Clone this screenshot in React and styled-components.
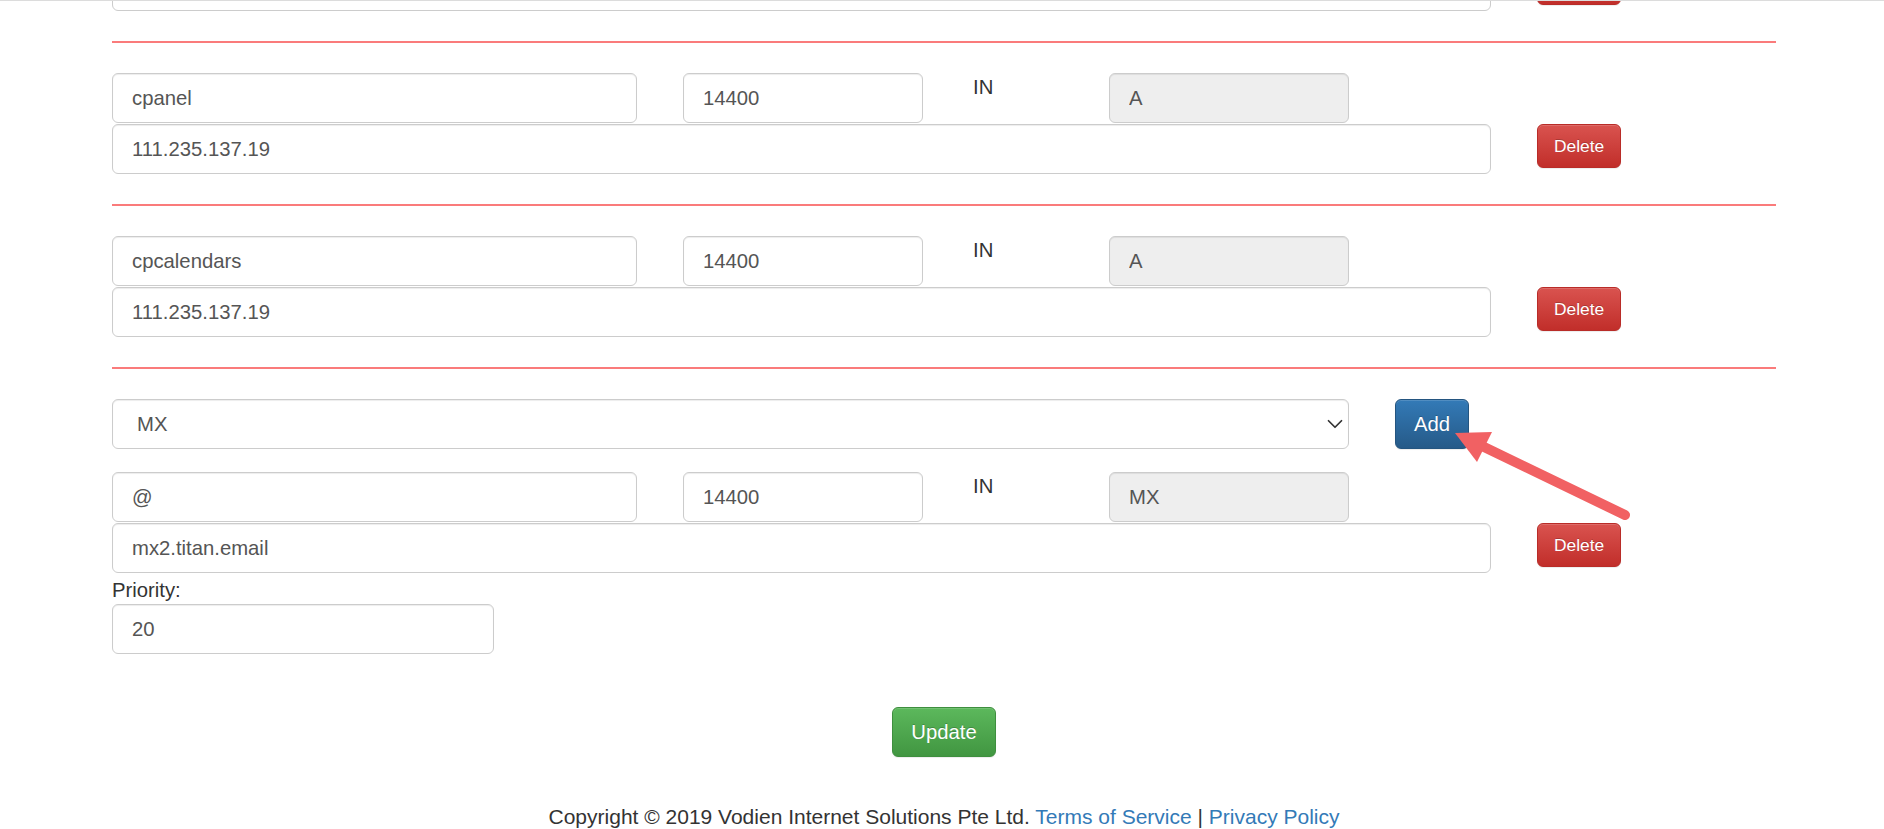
import React from "react";
import styled, { createGlobalStyle } from "styled-components";
import { ChevronDown } from "lucide-react";

const GlobalStyle = createGlobalStyle`
  html, body {
    margin: 0;
    padding: 0;
    background: #ffffff;
  }
  body {
    font-family: "Liberation Sans", Arial, Helvetica, sans-serif;
    color: #333333;
    overflow: hidden;
  }
  * {
    box-sizing: border-box;
  }
`;

const records = [
  { name: "cpanel", ttl: "14400", type: "A", value: "111.235.137.19" },
  { name: "cpcalendars", ttl: "14400", type: "A", value: "111.235.137.19" },
];

const Page = styled.div`
  position: relative;
  width: 100%;
  min-height: 829px;
  overflow: hidden;
`;

const HeaderEdge = styled.div`
  position: fixed;
  top: 0;
  left: 0;
  right: 0;
  height: 1px;
  background: #dcdcdc;
  z-index: 5;
`;

const Container = styled.div`
  width: 1664px;
  margin: -39px 0 0 112px;
`;

const RecordBlock = styled.div`
  display: flex;
  flex-direction: column;
`;

const TopRow = styled.div`
  display: grid;
  grid-template-columns: 525px 240px 94px 240px;
  column-gap: 46px;
  align-items: start;
`;

const BottomRow = styled.div`
  display: flex;
  align-items: flex-start;
  gap: 46px;
  margin-top: ${(p) => (p.$first ? "0" : "1px")};
`;

const TextInput = styled.input`
  display: block;
  width: ${(p) => p.$width || "100%"};
  height: 50px;
  padding: 0 19px;
  font-family: inherit;
  font-size: 20.3px;
  color: #555555;
  background: ${(p) => (p.readOnly ? "#eeeeee" : "#ffffff")};
  border: 1px solid #cccccc;
  border-radius: 6px;
  box-shadow: inset 0 1px 1px rgba(0, 0, 0, 0.075);
  outline: none;
`;

const InLabel = styled.div`
  font-size: 20.3px;
  color: #333333;
  padding: 2px 0 0 4px;
  line-height: 1.2;
`;

const Divider = styled.hr`
  margin: 30px 0;
  height: 2px;
  border: 0;
  background: #fa7b7b;
`;

const Btn = styled.button`
  flex: none;
  height: ${(p) => (p.$small ? "44px" : "50px")};
  min-width: ${(p) => (p.$small ? "84px" : "0")};
  padding: 0 ${(p) => (p.$small ? "16px" : "18px")};
  font-family: inherit;
  font-size: ${(p) => (p.$small ? "17.4px" : "20.3px")};
  color: #ffffff;
  border: 1px solid;
  border-radius: 6px;
  cursor: pointer;
  text-shadow: 0 -1px 0 rgba(0, 0, 0, 0.2);
  box-shadow: inset 0 1px 0 rgba(255, 255, 255, 0.15),
    0 1px 1px rgba(0, 0, 0, 0.075);
  background-image: ${(p) => p.$gradient};
  border-color: ${(p) => p.$border};
`;

const variants = {
  danger: { $gradient: "linear-gradient(to bottom, #d9534f 0%, #c12e2a 100%)", $border: "#b92c28" },
  primary: { $gradient: "linear-gradient(to bottom, #337ab7 0%, #265a88 100%)", $border: "#245580" },
  success: { $gradient: "linear-gradient(to bottom, #5cb85c 0%, #419641 100%)", $border: "#3e8f3e" },
};

const SelectRow = styled.div`
  display: flex;
  align-items: flex-start;
  gap: 46px;
  margin-bottom: 23px;
`;

const SelectWrap = styled.div`
  position: relative;
  width: 1237px;
  height: 50px;

  svg {
    position: absolute;
    right: 1px;
    top: 12px;
    color: #333333;
    pointer-events: none;
  }
`;

const Select = styled.select`
  appearance: none;
  -webkit-appearance: none;
  width: 100%;
  height: 100%;
  padding: 0 0 0 24px;
  font-family: inherit;
  font-size: 20.3px;
  color: #555555;
  background: #ffffff;
  border: 1px solid #cccccc;
  border-radius: 6px;
  box-shadow: inset 0 1px 1px rgba(0, 0, 0, 0.075);
  outline: none;
`;

const FieldLabel = styled.label`
  display: block;
  margin-top: 3px;
  font-size: 20.3px;
  line-height: 28px;
  color: #333333;
`;

const Actions = styled.div`
  display: flex;
  justify-content: center;
  margin-top: 53px;
`;

const Footer = styled.footer`
  margin-top: 46px;
  text-align: center;
  font-size: 21px;
  line-height: 28px;
  color: #333333;

  a {
    color: #337ab7;
    text-decoration: none;
  }
`;

const ArrowLayer = styled.svg`
  position: absolute;
  top: 0;
  left: 0;
  width: 1884px;
  height: 829px;
  pointer-events: none;
  z-index: 4;
`;

const Record = ({ rec }) => (
  <RecordBlock>
    <TopRow>
      <TextInput defaultValue={rec.name} />
      <TextInput defaultValue={rec.ttl} />
      <InLabel>IN</InLabel>
      <TextInput defaultValue={rec.type} readOnly />
    </TopRow>
    <BottomRow>
      <TextInput $width="1379px" defaultValue={rec.value} />
      <Btn $small {...variants.danger}>Delete</Btn>
    </BottomRow>
  </RecordBlock>
);

export default function App() {
  return (
    <Page>
      <GlobalStyle />
      <HeaderEdge />
      <Container>
        {/* tail of the record scrolled above the viewport */}
        <BottomRow $first>
          <TextInput $width="1379px" aria-label="address" />
          <Btn $small {...variants.danger} aria-label="Delete" />
        </BottomRow>
        <Divider />

        {records.map((rec) => (
          <React.Fragment key={rec.name}>
            <Record rec={rec} />
            <Divider />
          </React.Fragment>
        ))}

        <SelectRow>
          <SelectWrap>
            <Select defaultValue="MX">
              <option value="A">A</option>
              <option value="CNAME">CNAME</option>
              <option value="MX">MX</option>
              <option value="TXT">TXT</option>
            </Select>
            <ChevronDown size={26} strokeWidth={1.6} />
          </SelectWrap>
          <Btn {...variants.primary}>Add</Btn>
        </SelectRow>

        <Record rec={{ name: "@", ttl: "14400", type: "MX", value: "mx2.titan.email" }} />
        <FieldLabel>Priority:</FieldLabel>
        <TextInput $width="382px" defaultValue="20" />

        <Actions>
          <Btn {...variants.success}>Update</Btn>
        </Actions>

        <Footer>
          Copyright © 2019 Vodien Internet Solutions Pte Ltd.{" "}
          <a href="#terms">Terms of Service</a> | <a href="#privacy">Privacy Policy</a>
        </Footer>
      </Container>

      <ArrowLayer viewBox="0 0 1884 829">
        <line
          x1="1625"
          y1="515"
          x2="1482"
          y2="446"
          stroke="#f16163"
          strokeWidth="10"
          strokeLinecap="round"
        />
        <polygon points="1455,433 1492,432 1477,462" fill="#f16163" />
      </ArrowLayer>
    </Page>
  );
}
